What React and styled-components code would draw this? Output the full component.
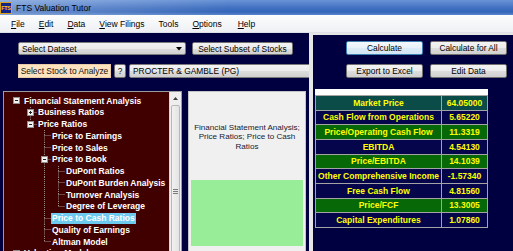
import React from 'react'
import styled, { createGlobalStyle } from 'styled-components'

const GlobalStyle = createGlobalStyle`
  * { box-sizing: border-box; }
  html, body { margin: 0; padding: 0; }
  body {
    width: 513px;
    height: 251px;
    overflow: hidden;
    background: #f0f0f0;
    font-family: "Liberation Sans", Arial, sans-serif;
  }
`

const Window = styled.div`
  width: 513px;
  height: 251px;
  display: flex;
  flex-direction: column;
  overflow: hidden;
`

const TitleBar = styled.div`
  height: 15px;
  display: flex;
  align-items: center;
  gap: 4px;
  font-size: 8.5px;
  color: #000;
  background:
    linear-gradient(to right, rgba(255, 255, 255, 0.28), rgba(255, 255, 255, 0) 45%),
    linear-gradient(to bottom, #6a94d6 0%, #3f6fc0 55%, #3465b8 80%, #5a86cc 100%);
`

const TitleIcon = styled.span`
  width: 12px;
  height: 12px;
  display: flex;
  align-items: center;
  justify-content: center;
  background: #10248a;
  border: 1px solid #d9a21e;
  color: #ffc21a;
  font-size: 5.5px;
  font-weight: bold;
  letter-spacing: -0.3px;
`

const MenuBar = styled.div`
  height: 18px;
  display: flex;
  align-items: center;
  padding-left: 4px;
  background: linear-gradient(#fdfdfd, #eef0f4);
  border-bottom: 1px solid #dde0e6;
`

const MenuItem = styled.span`
  padding: 0 7px;
  font-size: 8.5px;
  color: #000;
  margin-right: ${({ $extra }) => $extra || 0}px;
`

const Main = styled.div`
  flex: 1;
  min-height: 0;
  display: flex;
  gap: 4px;
  background: #e6e6e6;
`

const LeftPanel = styled.div`
  width: 309px;
  background: #000040;
  display: flex;
  flex-direction: column;
  padding-top: 9px;
  overflow: hidden;
`

const RightPanel = styled.div`
  flex: 1;
  margin-top: 2px;
  background: #000040;
  display: flex;
  flex-direction: column;
  padding: 6px 0 0 2px;
  overflow: hidden;
`

const ControlRow = styled.div`
  display: flex;
  align-items: stretch;
  gap: ${({ $gap }) => $gap}px;
  height: ${({ $h }) => $h}px;
  margin-top: ${({ $mt }) => $mt || 0}px;
  padding-left: 18px;
`

const winGradient = 'linear-gradient(#f3f3f3 0%, #ebebeb 50%, #dddddd 51%, #d0d0d0 100%)'

const Combo = styled.div`
  width: ${({ $w }) => $w}px;
  flex: none;
  display: flex;
  align-items: center;
  justify-content: space-between;
  padding: 0 3px 0 3px;
  border: 1px solid #7a7a7a;
  border-radius: 2px;
  background: ${winGradient};
  font-size: 8.4px;
  color: #000;
  white-space: nowrap;
  overflow: hidden;
`

const Button = styled.button`
  width: ${({ $w }) => ($w ? `${$w}px` : 'auto')};
  flex: none;
  padding: 0;
  border: 1px solid ${({ $focus }) => ($focus ? '#3c7fb1' : '#707070')};
  border-radius: 2px;
  background: ${({ $focus }) =>
    $focus ? 'linear-gradient(#f4f9fd 0%, #e8f2fa 50%, #dcebf7 51%, #d3e6f5 100%)' : winGradient};
  font-family: inherit;
  font-size: 8.4px;
  color: #000;
  white-space: nowrap;
`

const StockLabel = styled.div`
  width: 93px;
  flex: none;
  display: flex;
  align-items: center;
  justify-content: center;
  background: #fde2bf;
  border: 1px solid #e8cba6;
  font-size: 8.4px;
  color: #111;
  white-space: nowrap;
`

const BottomArea = styled.div`
  flex: 1;
  min-height: 0;
  margin-top: 13px;
  display: flex;
  gap: 6px;
  padding-left: 3px;
`

const TreeBox = styled.div`
  width: 179px;
  flex: none;
  display: flex;
  border: 1px solid #9c9c9c;
  border-bottom: none;
  background: #400000;
  overflow: hidden;
`

const TreeList = styled.div`
  flex: 1;
  padding-top: 3px;
  overflow: hidden;
`

const TreeRow = styled.div`
  height: 11.75px;
  display: flex;
  align-items: center;
  padding-left: 5px;
`

const TreeText = styled.span`
  padding: 0 1px;
  line-height: 10.5px;
  font-size: 8.5px;
  font-weight: bold;
  color: #fff;
  white-space: nowrap;
  background: ${({ $selected }) => ($selected ? '#6ec9ef' : 'transparent')};
`

const CellSvg = styled.svg`
  flex: none;
  display: block;
  .guide {
    stroke: #9a8a8a;
    stroke-width: 1;
    stroke-dasharray: 1 1;
  }
`

const ScrollBar = styled.div`
  width: 12px;
  flex: none;
  display: flex;
  flex-direction: column;
  background: #eeeeee;
  border-left: 1px solid #d8d8d8;
`

const ScrollArrow = styled.div`
  height: 12px;
  flex: none;
  display: flex;
  align-items: center;
  justify-content: center;
`

const ScrollThumb = styled.div`
  height: 172px;
  flex: none;
  margin: 1px 1px 0 1px;
  display: flex;
  align-items: center;
  justify-content: center;
  background: linear-gradient(to right, #f1f1f1, #e3e3e3);
  border: 1px solid #b8b8b8;
  border-radius: 2px;
`

const MiddlePanel = styled.div`
  width: 118px;
  flex: none;
  display: flex;
  flex-direction: column;
  background: #f0f0f0;
  border: 1px solid #c4c4c4;
  border-bottom: none;
  padding: 2px 2px 0 2px;
`

const Caption = styled.div`
  height: 86px;
  flex: none;
  display: flex;
  align-items: center;
  justify-content: center;
  text-align: center;
  font-size: 8.1px;
  line-height: 9.4px;
  color: #202030;
  padding: 0 2px;
`

const GreenBox = styled.div`
  height: 66px;
  flex: none;
  background: #98ee98;
`

const ButtonGrid = styled.div`
  display: grid;
  grid-template-columns: repeat(2, 77px);
  grid-auto-rows: 14px;
  column-gap: 7px;
  row-gap: 9px;
  justify-content: end;
  padding-right: 6px;
`

const HeaderStrip = styled.div`
  margin-top: 11px;
  width: 173px;
  height: 6px;
  background: #ffffff;
`

const DataTable = styled.div`
  width: 173px;
  display: grid;
  grid-template-columns: 125px 45px;
  grid-auto-rows: 13.67px;
  gap: 1px;
  background: #a4a4a4;
  border: 1px solid #a4a4a4;
`

const Cell = styled.div`
  background: ${({ $bg }) => $bg};
  color: #ffff00;
  font-size: 8.5px;
  font-weight: bold;
  display: flex;
  align-items: center;
  justify-content: center;
  white-space: nowrap;
  overflow: hidden;
`

const tree = [
  { t: 'Financial Statement Analysis', l: 0, exp: '-' },
  { t: 'Business Ratios', l: 1, exp: '+' },
  { t: 'Price Ratios', l: 1, exp: '-' },
  { t: 'Price to Earnings', l: 2 },
  { t: 'Price to Sales', l: 2 },
  { t: 'Price to Book', l: 2, exp: '-' },
  { t: 'DuPont Ratios', l: 3 },
  { t: 'DuPont Burden Analysis', l: 3 },
  { t: 'Turnover Analysis', l: 3 },
  { t: 'Degree of Leverage', l: 3 },
  { t: 'Price to Cash Ratios', l: 2, selected: true },
  { t: 'Quality of Earnings', l: 2 },
  { t: 'Altman Model', l: 2 },
  { t: 'Valuation Models', l: 0, exp: '+' },
]

const hasNextSibling = (i) => {
  const l = tree[i].l
  for (let j = i + 1; j < tree.length; j++) {
    if (tree[j].l < l) return false
    if (tree[j].l === l) return true
  }
  return false
}

const ancestorAt = (i, k) => {
  for (let j = i - 1; j >= 0; j--) if (tree[j].l === k) return j
  return -1
}

const H = 11.75
const CX = 7.5
const CY = 5.5

const TreeCell = ({ full, top, bottom, right, exp }) => (
  <CellSvg width="14" height={H} viewBox={`0 0 14 ${H}`}>
    {full && <line className="guide" x1={CX} y1="0" x2={CX} y2={H} />}
    {top && <line className="guide" x1={CX} y1="0" x2={CX} y2={CY} />}
    {bottom && <line className="guide" x1={CX} y1={CY} x2={CX} y2={H} />}
    {right && <line className="guide" x1={CX} y1={CY} x2="14" y2={CY} />}
    {exp && (
      <g>
        <rect x="4.5" y="2.5" width="6" height="6" fill="#f2f2f2" stroke="#8f8f8f" />
        <line x1="6" y1={CY} x2="9" y2={CY} stroke="#202020" />
        {exp === '+' && <line x1={CX} y1="4" x2={CX} y2="7" stroke="#202020" />}
      </g>
    )}
  </CellSvg>
)

const TreeNode = ({ node, index }) => {
  const cells = []
  for (let k = 0; k <= node.l; k++) {
    if (k < node.l) {
      const a = ancestorAt(index, k)
      cells.push(<TreeCell key={k} full={k > 0 && a >= 0 && hasNextSibling(a)} />)
    } else {
      const lines = k > 0
      cells.push(
        <TreeCell
          key={k}
          top={lines}
          bottom={lines && hasNextSibling(index)}
          right={lines}
          exp={node.exp}
        />
      )
    }
  }
  return (
    <TreeRow>
      {cells}
      <TreeText $selected={node.selected}>{node.t}</TreeText>
    </TreeRow>
  )
}

const NAVY = '#05054c'
const GREEN = '#066806'
const TEAL = '#0b4c49'

const rows = [
  ['Market Price', '64.05000', TEAL],
  ['Cash Flow from Operations', '5.65220', NAVY],
  ['Price/Operating Cash Flow', '11.3319', GREEN],
  ['EBITDA', '4.54130', NAVY],
  ['Price/EBITDA', '14.1039', GREEN],
  ['Other Comprehensive Income', '-1.57340', NAVY],
  ['Free Cash Flow', '4.81560', NAVY],
  ['Price/FCF', '13.3005', GREEN],
  ['Capital Expenditures', '1.07860', NAVY],
]

const menus = [
  ['F', 'ile'],
  ['E', 'dit'],
  ['D', 'ata'],
  ['V', 'iew Filings'],
  ['', 'Tools'],
  ['O', 'ptions'],
  ['H', 'elp'],
]

const App = () => {
  return (
    <Window>
      <GlobalStyle />
      <TitleBar>
        <TitleIcon>FTS</TitleIcon>
        FTS Valuation Tutor
      </TitleBar>
      <MenuBar>
        {menus.map(([u, rest]) => (
          <MenuItem key={u + rest} $extra={rest === 'ptions' ? 2 : 0}>
            {u && <u>{u}</u>}
            {rest}
          </MenuItem>
        ))}
      </MenuBar>
      <Main>
        <LeftPanel>
          <ControlRow $h={13} $gap={6}>
            <Combo $w={168}>
              Select Dataset
              <svg width="6" height="4" viewBox="0 0 6 4">
                <path d="M0 0 H6 L3 3.5 Z" fill="#000" />
              </svg>
            </Combo>
            <Button $w={101}>Select Subset of Stocks</Button>
          </ControlRow>
          <ControlRow $h={14} $gap={3} $mt={9}>
            <StockLabel>Select Stock to Analyze</StockLabel>
            <Button $w={12}>?</Button>
            <Combo $w={182}>PROCTER &amp; GAMBLE (PG)</Combo>
          </ControlRow>
          <BottomArea>
            <TreeBox>
              <TreeList>
                {tree.map((node, i) => (
                  <TreeNode key={node.t} node={node} index={i} />
                ))}
              </TreeList>
              <ScrollBar>
                <ScrollArrow>
                  <svg width="5" height="3" viewBox="0 0 5 3">
                    <path d="M0 3 H5 L2.5 0 Z" fill="#404040" />
                  </svg>
                </ScrollArrow>
                <ScrollThumb>
                  <svg width="5" height="5" viewBox="0 0 5 5">
                    <path d="M0 0.5 H5 M0 2.5 H5 M0 4.5 H5" stroke="#7a7a7a" strokeWidth="1" />
                  </svg>
                </ScrollThumb>
              </ScrollBar>
            </TreeBox>
            <MiddlePanel>
              <Caption>Financial Statement Analysis; Price Ratios; Price to Cash Ratios</Caption>
              <GreenBox />
            </MiddlePanel>
          </BottomArea>
        </LeftPanel>
        <RightPanel>
          <ButtonGrid>
            <Button $focus>Calculate</Button>
            <Button>Calculate for All</Button>
            <Button>Export to Excel</Button>
            <Button>Edit Data</Button>
          </ButtonGrid>
          <HeaderStrip />
          <DataTable>
            {rows.map(([label, value, bg]) => (
              <React.Fragment key={label}>
                <Cell $bg={bg}>{label}</Cell>
                <Cell $bg={bg}>{value}</Cell>
              </React.Fragment>
            ))}
          </DataTable>
        </RightPanel>
      </Main>
    </Window>
  )
}

export default App
